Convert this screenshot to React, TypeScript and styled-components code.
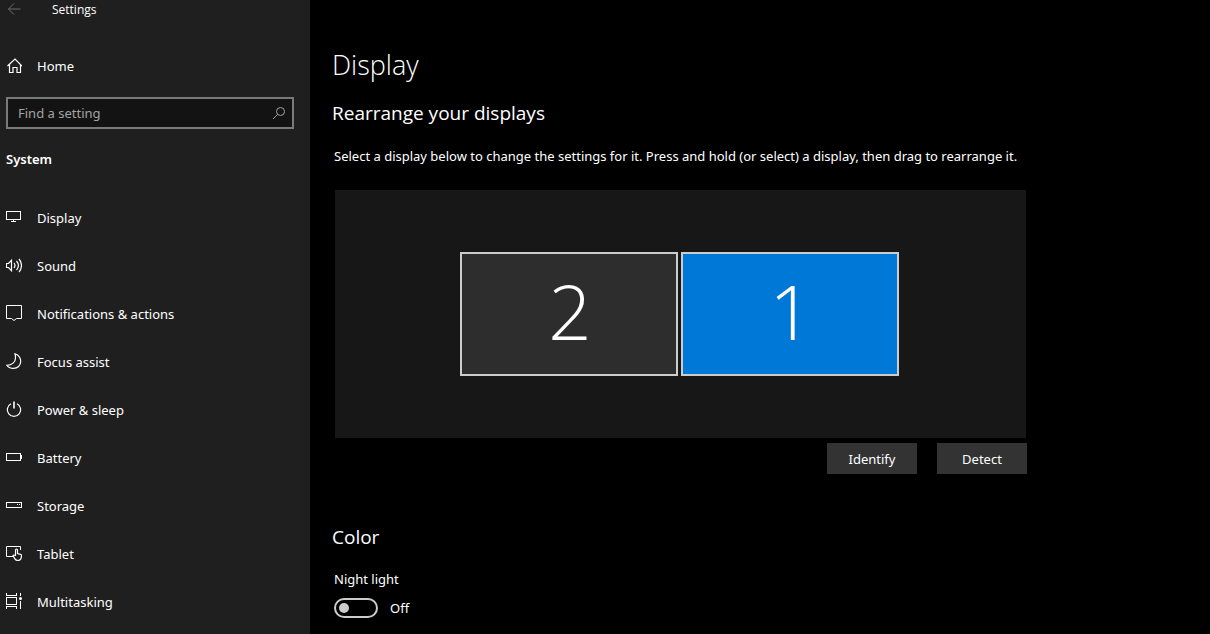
import React from "react";
import styled, { createGlobalStyle } from "styled-components";

const GlobalStyle = createGlobalStyle`
  *, *::before, *::after { box-sizing: border-box; }
  body {
    margin: 0;
    background: #000;
    color: #fff;
    font-family: "Noto Sans", "Open Sans", sans-serif;
    font-size: 13px;
    line-height: 20px;
  }
  h1, h2, p { margin: 0; }
  button, input { font: inherit; color: inherit; }
`;

const Window = styled.div`
  display: flex;
  min-height: 100vh;
`;

const Sidebar = styled.aside`
  flex: 0 0 310px;
  background: #1f1f1f;
`;

const TitleBar = styled.header`
  display: flex;
  align-items: center;
  gap: 30px;
  height: 20px;
  padding-left: 6px;
  font-family: "Open Sans", sans-serif;
  font-size: 12px;
`;

const BackButton = styled.button`
  display: flex;
  padding: 0;
  border: 0;
  background: none;
  color: #6c6c6c;
`;

const NavLink = styled.a`
  display: flex;
  align-items: center;
  gap: 15px;
  height: 48px;
  padding-left: 6px;
  color: inherit;
  text-decoration: none;
`;

const HomeRow = styled.div`
  padding: 22px 0 7px;
`;

const Search = styled.form`
  display: flex;
  align-items: center;
  height: 32px;
  margin: 0 16px 0 6px;
  padding: 0 5px 0 10px;
  border: 2px solid #7a7a7a;
  background: #131313;
  color: #a3a3a3;
`;

const SearchInput = styled.input`
  flex: 1;
  min-width: 0;
  padding: 0;
  border: 0;
  outline: 0;
  background: none;
  &::placeholder { color: #a3a3a3; opacity: 1; }
`;

const Group = styled.h2`
  padding: 20px 0 24px 6px;
  font-size: 13px;
  font-weight: 600;
`;

const NavList = styled.ul`
  margin: 0;
  padding: 0;
  list-style: none;
`;

const NavText = styled.span`
  padding-top: 2px;
`;

const Icon = styled.svg`
  flex: none;
  width: 16px;
  height: 16px;
  fill: none;
  stroke: currentColor;
`;

const Main = styled.main`
  flex: 1;
  min-width: 0;
  padding: 45px 24px 16px 22px;
`;

const Content = styled.div`
  max-width: 695px;
`;

const PageTitle = styled.h1`
  font-family: "Open Sans", sans-serif;
  font-size: 27px;
  font-weight: 300;
  line-height: 40px;
`;

const Heading = styled.h2`
  font-family: "Open Sans", sans-serif;
  font-size: 19px;
  font-weight: 400;
  line-height: 28px;
`;

const Section = styled.section`
  padding-top: 14px;
`;

const ColorSection = styled.section`
  padding-top: 49px;
`;

const Body = styled.div`
  padding-left: 2px;
`;

const Hint = styled.p`
  padding: 19px 0 24px;
  white-space: nowrap;
`;

const Arrangement = styled.div`
  display: flex;
  align-items: center;
  justify-content: center;
  gap: 3px;
  height: 248px;
  margin: 0 1px;
  padding-right: 3px;
  background: #171717;
`;

const Monitor = styled.button<{ $selected?: boolean }>`
  width: 218px;
  height: 124px;
  padding: 0 0 6px 3px;
  border: 2px solid #ccc;
  background: ${(p) => (p.$selected ? "#0078d7" : "#2d2d2d")};
  font-family: "Open Sans", sans-serif;
  font-size: 76px;
  font-weight: 300;
  line-height: 112px;
`;

const Actions = styled.div`
  display: flex;
  justify-content: flex-end;
  gap: 20px;
  padding-top: 5px;
`;

const ActionButton = styled.button`
  width: 90px;
  height: 31px;
  padding: 0;
  border: 0;
  background: #333;
`;

const ToggleLabel = styled.label`
  display: block;
  padding: 18px 0 9px;
`;

const ToggleRow = styled.div`
  display: flex;
  align-items: center;
  gap: 12px;
`;

const Toggle = styled.input`
  appearance: none;
  display: flex;
  align-items: center;
  width: 44px;
  height: 20px;
  margin: 0;
  padding: 0 3px;
  border: 2px solid #ccc;
  border-radius: 10px;
  &::before {
    content: "";
    width: 10px;
    height: 10px;
    border-radius: 50%;
    background: #ccc;
  }
  &:checked { justify-content: flex-end; }
`;

const items: { name: string; icon: React.ReactNode }[] = [
  {
    name: "Display",
    icon: <path d="M.5 2.5h14v8H.5zM7.5 11v1M5 12.5h5" shapeRendering="crispEdges" />,
  },
  {
    name: "Sound",
    icon: (
      <path
        d="M.5 6.5h2l3-3.2v10.400l-3-3.200h-2zM8 6c1.200 1.500 1.200 3.500 0 5M10.500 4c2.300 2.700 2.300 6.300 0 9M13 2c3.300 3.700 3.300 9.300 0 13"
        strokeWidth="1.2"
      />
    ),
  },
  { name: "Notifications & actions", icon: <path d="M.5.5h15v13h-5L8 15.500l-2.500-2h-5z" /> },
  {
    name: "Focus assist",
    icon: (
      <path
        d="M9 .7C12.500 2 14.700 5 14.700 8.500C14.700 12.500 11.500 15.400 7.500 15.400C4.500 15.400 2 14.200 .8 12.300C6 12.300 9.500 9 9.500 5C9.500 3.500 9.300 2 9 .7z"
        strokeWidth="1.2"
      />
    ),
  },
  {
    name: "Power & sleep",
    icon: (
      <>
        <path d="M5 2.700a6.700 6.700 0 1 0 6 0" strokeWidth="1.2" />
        <path d="M8 .5v7" strokeWidth="1.6" />
      </>
    ),
  },
  { name: "Battery", icon: <path d="M.5 4.500h14v7H.5zM15.500 6v4" shapeRendering="crispEdges" /> },
  {
    name: "Storage",
    icon: <path d="M.5 5.500h15v5H.5zM11 7.500h1M13 7.500h1" shapeRendering="crispEdges" />,
  },
  {
    name: "Tablet",
    icon: (
      <>
        <path d="M7 11.500H.5v-10h14V5" />
        <path
          d="M9.500 11V5a1 1 0 0 1 2 0v3.500l3 .8c.7.200 1 .6 1 1.200 0 3-1 5-3.500 5-2 0-3-1-3.500-2.200L7 10.500c.8-.9 1.800-.5 2.500.5"
          strokeWidth="1.2"
        />
      </>
    ),
  },
  {
    name: "Multitasking",
    icon: (
      <>
        <path
          d="M.5 0v2.500h10V0M.5 4.500h10v7H.5zM.5 16v-2.500h10V16M14.500 0v3M14.500 8v8"
          shapeRendering="crispEdges"
        />
        <circle cx="14.5" cy="5.5" r="1.5" fill="currentColor" stroke="none" />
      </>
    ),
  },
];

export default function App() {
  return (
    <>
      <GlobalStyle />
      <Window>
        <Sidebar>
          <TitleBar>
            <BackButton type="button" aria-label="Back">
              <Icon viewBox="0 0 16 16">
                <path d="M2.500 7h12M8 1.500L2.500 7 8 12.500" />
              </Icon>
            </BackButton>
            <span>Settings</span>
          </TitleBar>
          <HomeRow>
            <NavLink href="#home">
              <Icon viewBox="0 0 16 16">
                <path d="M1.500 8L9 1l7 7M3.500 6.500v8h3.500v-5h4v5h3.500v-8" strokeWidth="1.2" />
              </Icon>
              <span>Home</span>
            </NavLink>
          </HomeRow>
          <Search role="search">
            <SearchInput type="text" placeholder="Find a setting" aria-label="Find a setting" />
            <Icon viewBox="0 0 16 16">
              <circle cx="9.5" cy="6.5" r="4" />
              <path d="M6.500 9.500L2 14" />
            </Icon>
          </Search>
          <Group>System</Group>
          <NavList>
            {items.map((item) => (
              <li key={item.name}>
                <NavLink href={"#" + item.name.split(" ")[0].toLowerCase()}>
                  <Icon viewBox="0 0 16 16">{item.icon}</Icon>
                  <NavText>{item.name}</NavText>
                </NavLink>
              </li>
            ))}
          </NavList>
        </Sidebar>
        <Main>
          <Content>
            <PageTitle>Display</PageTitle>
            <Section>
              <Heading>Rearrange your displays</Heading>
              <Body>
                <Hint>
                  Select a display below to change the settings for it. Press and hold (or select) a display, then drag to rearrange it.
                </Hint>
                <Arrangement>
                  <Monitor type="button">2</Monitor>
                  <Monitor type="button" $selected>1</Monitor>
                </Arrangement>
                <Actions>
                  <ActionButton type="button">Identify</ActionButton>
                  <ActionButton type="button">Detect</ActionButton>
                </Actions>
              </Body>
            </Section>
            <ColorSection>
              <Heading>Color</Heading>
              <Body>
                <ToggleLabel htmlFor="night-light">Night light</ToggleLabel>
                <ToggleRow>
                  <Toggle type="checkbox" role="switch" id="night-light" />
                  <span>Off</span>
                </ToggleRow>
              </Body>
            </ColorSection>
          </Content>
        </Main>
      </Window>
    </>
  );
}
